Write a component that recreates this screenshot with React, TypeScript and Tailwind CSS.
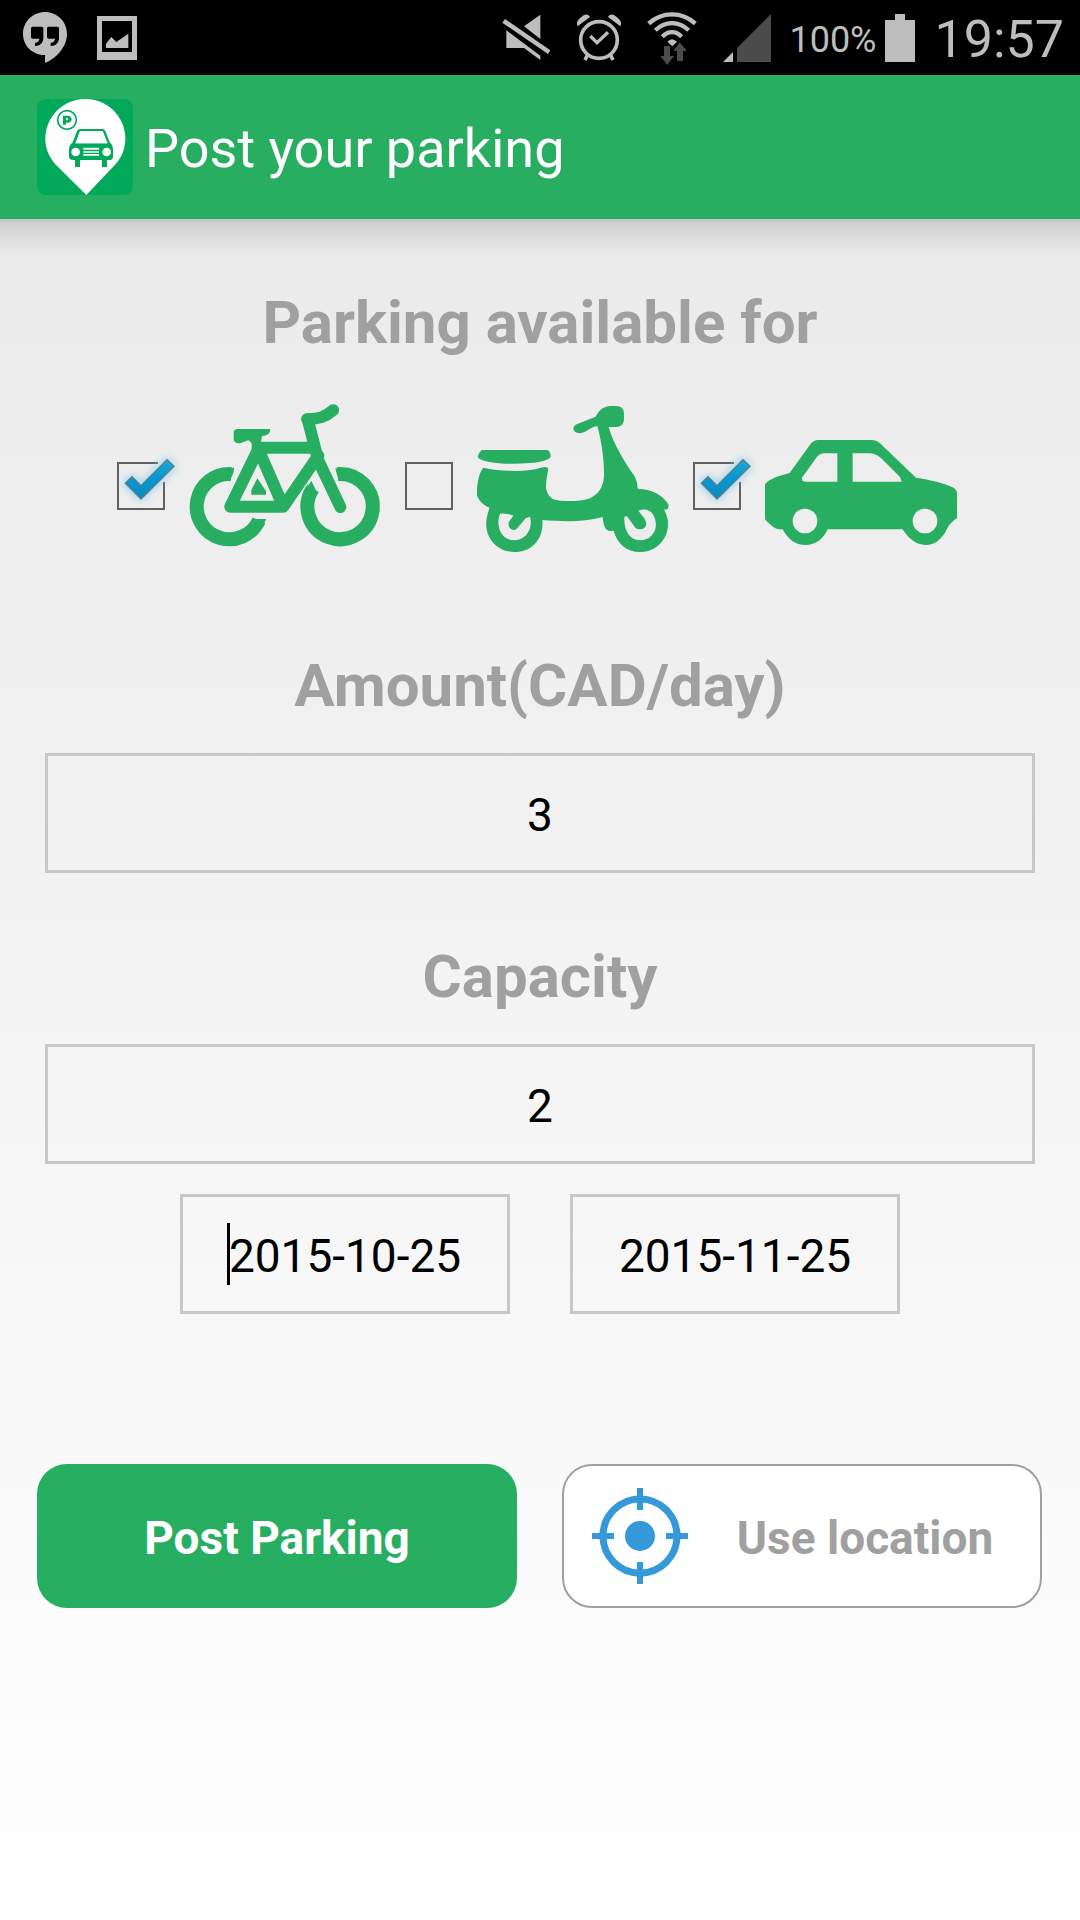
import type { ReactNode } from "react";

const GREEN = "#28ae61";

function HangoutsIcon() {
  return (
    <svg viewBox="69 36 132 153" className="w-[44px] h-[51px]" fill="#bdbdbd">
      <path d="M135 36C171 36 201 65 201 101C201 139 171 174 135 189V165C98 165 69 138 69 101C69 65 99 36 135 36Z" />
      <path fill="#000" d="M98 80H125Q130 80 130 85V114C130 128 120 138 105 138V129C113 127 118 123 118 116H98Q93 116 93 111V85Q93 80 98 80ZM146 80H172Q177 80 177 85V114C177 128 167 138 152 138V129C160 127 165 123 165 116H146Q141 116 141 111V85Q141 80 146 80Z" />
    </svg>
  );
}

function PictureIcon() {
  return (
    <svg viewBox="291 48 120 132" className="w-10 h-11" fill="#bdbdbd">
      <path fillRule="evenodd" d="M291 48H411V180H291ZM306 63V156H396V63Z" />
      <path d="M318 144V131L334 111L349 126L385 101V144Z" />
    </svg>
  );
}

function MuteIcon() {
  return (
    <svg viewBox="68 42 147 141" className="w-[49px] h-[47px]" fill="#bdbdbd">
      <path d="M183 44V117L134 79ZM81 91L183 167V180L134 144H81Z" />
      <path d="M77 57L213 151L206 162L69 68Z" />
    </svg>
  );
}

function AlarmIcon() {
  return (
    <svg viewBox="291 42 132 141" className="w-11 h-[47px]" fill="none" stroke="#bdbdbd">
      <circle cx="357" cy="120" r="55" strokeWidth="11" />
      <path d="M331 108L351 128L384 97" strokeWidth="10" />
      <path d="M322 166L315 180M392 166L399 180" strokeWidth="11" />
      <path d="M293 79C288 67 292 61 303 52C313 43 322 39 330 51ZM421 79C426 67 422 61 411 52C401 43 392 39 384 51Z" fill="#bdbdbd" stroke="none" />
    </svg>
  );
}

function WifiIcon() {
  return (
    <svg viewBox="507 27 150 162" className="w-[50px] h-[54px]" fill="none" stroke="#bdbdbd" strokeWidth="13">
      <path d="M512 65C552 28 612 28 652 65M532 85C561 56 603 56 632 85M553 104C570 86 594 86 611 104" />
      <path d="M568 119Q582 104 597 119L583 133Z" fill="#bdbdbd" stroke="none" />
      <path d="M558 132H576V162H588L568 189L547 162H558ZM597 177V147H586L605 121L627 147H615V177Z" fill="#4b4b4b" stroke="none" />
    </svg>
  );
}

function SignalIcon() {
  return (
    <svg viewBox="726 39 144 144" className="size-12">
      <path d="M726 183L756 153V183Z" fill="#bdbdbd" />
      <path d="M768 183V141L870 39V183Z" fill="#4b4b4b" />
    </svg>
  );
}

function BatteryIcon() {
  return (
    <svg viewBox="309 36 90 144" className="w-[30px] h-12" fill="#bdbdbd">
      <path d="M339 36H369V54H399V180H309V54H339Z" />
    </svg>
  );
}

function AppLogo() {
  return (
    <svg viewBox="111 297 288 288" className="size-24">
      <rect x="111" y="297" width="288" height="288" rx="26" fill="#03a95a" />
      <path d="M256 297C322 297 376 350 376 416C376 447 364 471 348 491L259 585L166 493C147 470 136 446 136 416C136 350 190 297 256 297Z" fill="#fff" />
      <circle cx="201" cy="360" r="28" fill="none" stroke="#03a95a" strokeWidth="5" />
      <path d="M189 347H203C219 347 219 368 203 368H198V374H189ZM198 354V361H202Q207 358 202 354Z" fill="#03a95a" fillRule="evenodd" />
      <path fill="#03a95a" fillRule="evenodd" d="M240 387H307Q313 387 316 393L329 427C337 434 339 441 339 450V470Q338 480 328 480H321V501H306V480H240V501H225V480H219Q208 479 207 470V450C207 441 210 434 218 427L231 393Q234 387 240 387ZM241 393L226 430H323L308 393Z" />
      <path d="M240 393H307L321 430H227Z" fill="#fff" />
      <circle cx="227" cy="456" r="13" fill="#fff" />
      <circle cx="320" cy="456" r="13" fill="#fff" />
      <path d="M250 443H297V449H250ZM250 454H297V458H250ZM250 462H297V467H250Z" fill="#fff" />
    </svg>
  );
}

function BikeIcon() {
  return (
    <svg viewBox="268 33 576 510" className="w-[192px] h-[170px]" fill="none" stroke={GREEN}>
      <path d="M395 252A98 98 0 1 0 478 391" strokeWidth="42" />
      <path d="M403 232C404 248 396 262 388 272L360 250ZM456 387H500L484 418Z" fill={GREEN} stroke="none" />
      <path d="M714 252A98 98 0 1 1 640 295" strokeWidth="42" />
      <path d="M707 233C710 252 715 264 722 273L748 250ZM635 272L653 309L632 335L612 308Z" fill={GREEN} stroke="none" />
      <path d="M474 181L392 350H551L656 197M480 173H645M477 180L549 345M624 88L656 212L722 351" strokeWidth="36" strokeLinejoin="round" strokeLinecap="round" />
      <path d="M411 117H511C512 129 505 137 487 138L484 155V190H456V160L447 151C436 153 429 160 415 160Q403 158 402 148V126Q403 118 411 117Z" fill={GREEN} stroke="none" />
      <path d="M622 87C656 88 677 81 701 60" strokeWidth="35" strokeLinejoin="round" strokeLinecap="round" />
      <path d="M473 265L499 303V314H455V300Z" fill={GREEN} stroke="none" />
    </svg>
  );
}

function ScooterIcon() {
  return (
    <svg viewBox="261 33 576 510" className="w-[192px] h-[170px]" fill={GREEN}>
      <path d="M275 180H473Q482 187 482 200C474 211 454 216 421 219C382 222 331 223 299 216C279 212 265 207 263 200Q266 188 275 180Z" />
      <path d="M280 233C334 245 409 247 452 233Q472 228 475 236C471 256 468 275 468 294C472 319 487 331 511 332C544 334 574 333 596 326C626 315 640 291 642 258C643 219 637 163 622 108C602 111 588 128 570 130C548 130 544 110 560 103L617 80C631 53 647 47 672 48C692 46 702 54 702 72V87C701 104 692 112 672 111H656C671 163 699 208 735 261Q743 277 743 296C785 298 819 313 836 345L834 357L822 359C829 372 835 387 834 404C833 451 796 486 750 486C709 486 682 461 671 422Q656 426 648 418Q640 407 638 381C582 397 520 395 457 390C462 447 425 486 374 486C322 486 280 442 290 385L298 353C278 345 265 330 261 316V296C264 267 268 248 280 233Z" />
      <path fill="#ededed" d="M330 371Q344 368 370 377L356 397C353 413 367 425 379 418L407 385L420 380C430 417 408 450 374 451C337 452 315 413 330 371ZM703 380L711 379L736 413C750 424 770 416 769 399L764 386L745 362C764 355 779 359 788 372C812 409 789 451 750 451C719 450 701 423 703 380Z" />
    </svg>
  );
}

function CarIcon() {
  return (
    <svg viewBox="255 33 576 510" className="w-[192px] h-[170px]" fill={GREEN}>
      <path fillRule="evenodd" d="M415 150H577Q588 150 600 160L708 263C750 269 796 280 818 292Q831 300 831 309V384C819 393 806 404 801 417C786 448 765 465 737 465C707 465 684 444 668 418H443C430 447 407 465 377 465C346 465 325 449 308 418C283 421 269 402 255 388V282C273 263 300 257 329 249L390 164Q400 150 415 150ZM430 190Q417 192 409 203L366 263Q365 275 375 275H472V190ZM518 190V275H665L660 261L606 207Q591 192 570 190Z" />
      <circle cx="375" cy="393" r="37" fill="#eee" />
      <circle cx="735" cy="393" r="37" fill="#eee" />
    </svg>
  );
}

function TargetIcon() {
  return (
    <svg viewBox="0 0 96 96" className="size-24 shrink-0" fill="none" stroke="#3598db" strokeWidth="6">
      <circle cx="48" cy="48" r="37" strokeWidth="7" />
      <path d="M48 0V22M48 74V96M0 48H22M74 48H96" />
      <path d="M43 10L48 2L53 10ZM43 86L48 94L53 86ZM10 43L2 48L10 53ZM86 43L94 48L86 53Z" fill="#3598db" stroke="none" />
      <circle cx="48" cy="48" r="15" fill="#3598db" stroke="none" />
    </svg>
  );
}

function CheckMark() {
  return (
    <svg viewBox="51 216 144 144" className="pointer-events-none absolute inset-0 hidden size-12 overflow-visible peer-checked:block">
      <defs>
        <filter id="glow" x="-50%" y="-50%" width="200%" height="200%">
          <feGaussianBlur stdDeviation="12" />
        </filter>
        <linearGradient id="tick" x1="0" y1="0" x2="0" y2="1">
          <stop offset="0" stopColor="#22a5dc" />
          <stop offset="0.5" stopColor="#0099d4" />
          <stop offset="1" stopColor="#1188bd" />
        </linearGradient>
      </defs>
      <path d="M174 219H54V357H192V276" fill="none" stroke="#606060" strokeWidth="6" />
      <path d="M76 280L96 260L123 287L201 209L222 229L123 327Z" fill="#7cc8ec" stroke="#7cc8ec" strokeWidth="12" opacity="0.7" filter="url(#glow)" />
      <path d="M76 280L96 260L123 287L201 209L222 229L123 327Z" fill="url(#tick)" stroke="#5f7c8a" strokeWidth="4" />
    </svg>
  );
}

function VehicleOption({ name, checked, children }: { name: string; checked?: boolean; children: ReactNode }) {
  return (
    <label className="flex items-center gap-6">
      <span className="relative block size-12">
        <input
          type="checkbox"
          aria-label={name}
          defaultChecked={checked}
          className="peer block size-12 appearance-none border-2 border-[#606060] checked:border-transparent"
        />
        <CheckMark />
      </span>
      {children}
    </label>
  );
}

const fieldClass =
  "block h-[120px] w-full border-[3px] border-[#c8c8c8] bg-transparent pt-1 text-center text-[46px] text-black outline-none";
const headingClass = "block text-center text-[60px] leading-[72px] font-bold text-[#a0a0a0]";

export default function App() {
  return (
    <div className="flex min-h-screen flex-col bg-linear-to-b from-[#e8e8e8] to-white font-['Roboto',sans-serif]">
      <div className="flex h-[75px] items-center justify-between bg-black pr-4 pl-[23px] text-[#bdbdbd]">
        <div className="flex items-center gap-[30px]">
          <HangoutsIcon />
          <PictureIcon />
        </div>
        <div className="flex items-center">
          <div className="flex items-center gap-[26px]">
            <MuteIcon />
            <AlarmIcon />
            <WifiIcon />
            <SignalIcon />
          </div>
          <span className="ml-[18px] pt-1 text-[36px] leading-none">100%</span>
          <span className="ml-2">
            <BatteryIcon />
          </span>
          <span className="ml-5 pt-1 text-[52px] leading-none">19:57</span>
        </div>
      </div>

      <header className="flex h-36 items-center gap-3 bg-[#28ae61] pl-[37px]">
        <AppLogo />
        <h1 className="pt-1 text-[54px] leading-[64px] text-white">Post your parking</h1>
      </header>
      <div className="-mb-9 h-9 border-t-[3px] border-black/15 bg-linear-to-b from-black/12 to-transparent bg-clip-padding" />

      <main className="px-[37px] pt-[68px]">
        <fieldset>
          <legend className={`${headingClass} w-full`}>Parking available for</legend>
          <div className="mt-[42px] flex justify-center gap-6 pr-[6px]">
            <VehicleOption name="Bicycle" checked>
              <BikeIcon />
            </VehicleOption>
            <VehicleOption name="Scooter">
              <ScooterIcon />
            </VehicleOption>
            <VehicleOption name="Car" checked>
              <CarIcon />
            </VehicleOption>
          </div>
        </fieldset>

        <div className="mt-[79px] px-2">
          <label htmlFor="amount" className={headingClass}>
            Amount(CAD/day)
          </label>
          <input id="amount" type="text" defaultValue="3" className={`${fieldClass} mt-[31px]`} />
        </div>

        <div className="mt-[68px] px-2">
          <label htmlFor="capacity" className={headingClass}>
            Capacity
          </label>
          <input id="capacity" type="text" defaultValue="2" className={`${fieldClass} mt-[31px]`} />
        </div>

        <div className="mt-[30px] flex justify-center gap-[60px]">
          <div className="relative w-[330px]">
            <input type="text" aria-label="From date" defaultValue="2015-10-25" className={fieldClass} />
            <span className="absolute top-[29px] left-[47px] h-[62px] w-[3px] bg-black" />
          </div>
          <div className="w-[330px]">
            <input type="text" aria-label="To date" defaultValue="2015-11-25" className={fieldClass} />
          </div>
        </div>

        <div className="mt-[150px] grid grid-cols-2 gap-[45px] pr-px">
          <button type="button" className="h-36 rounded-[30px] bg-[#28ae61] pt-1 text-[46px] font-bold text-white">
            Post Parking
          </button>
          <button
            type="button"
            className="flex h-36 items-center rounded-[30px] border-2 border-[#a0a0a0] bg-white px-7 text-[46px] font-bold text-[#a0a0a0]"
          >
            <TargetIcon />
            <span className="flex-1 pt-1 pl-[30px]">Use location</span>
          </button>
        </div>
      </main>
    </div>
  );
}
